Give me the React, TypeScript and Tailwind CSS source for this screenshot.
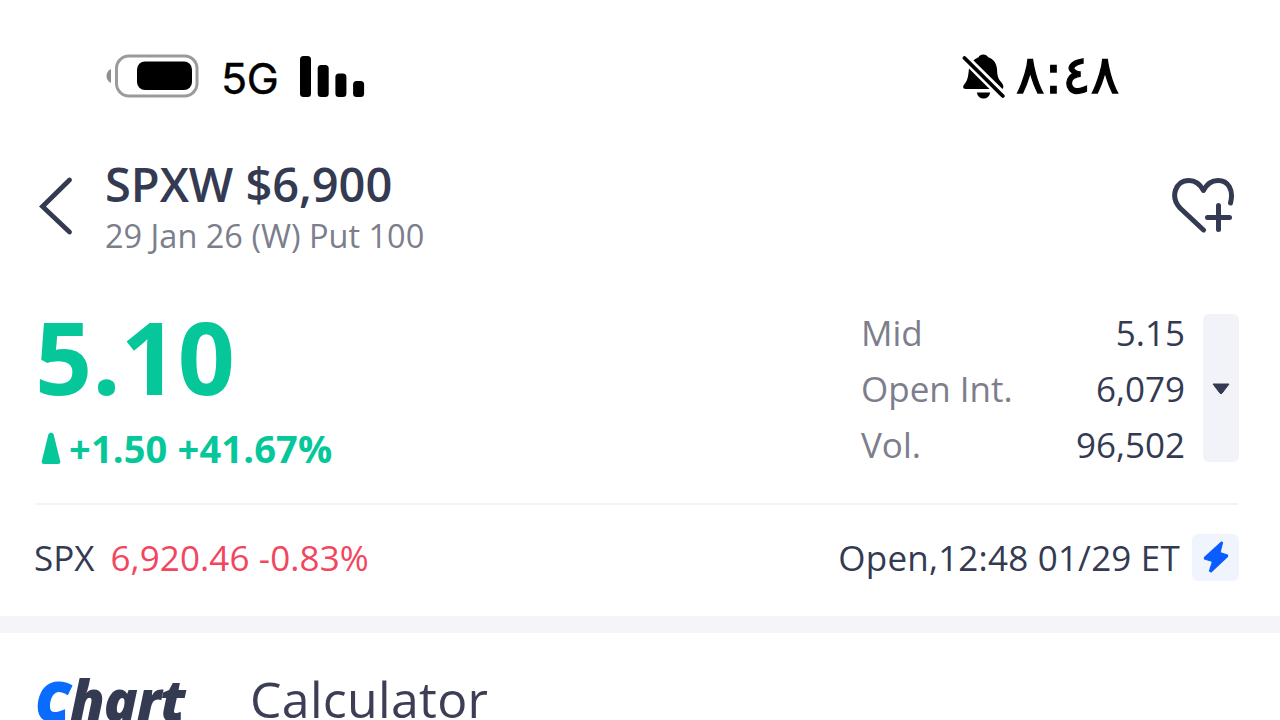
const STATS = [
  { label: "Mid", value: "5.15" },
  { label: "Open Int.", value: "6,079" },
  { label: "Vol.", value: "96,502" },
];

const SIGNAL_BARS = [
  { y: 0, height: 41 },
  { y: 9, height: 32 },
  { y: 17.5, height: 23.5 },
  { y: 25, height: 16 },
];

function BatteryIcon() {
  return (
    <svg width="93" height="44" viewBox="0 0 93 44" fill="none">
      <path d="M5 15v14C2 27.500 0.500 25 0.500 22S2 16.500 5 15Z" fill="#8f8f8f" />
      <rect x="10.500" y="2" width="80.500" height="40" rx="12.500" stroke="#9b9b9b" strokeWidth="3" />
      <rect x="31" y="7.500" width="55" height="28.500" rx="8" fill="#000" />
    </svg>
  );
}

function SignalIcon() {
  return (
    <svg width="65" height="41" viewBox="0 0 65 41">
      {SIGNAL_BARS.map((bar, index) => (
        <rect
          key={bar.y}
          x={index * 17.7}
          y={bar.y}
          width="11"
          height={bar.height}
          rx="3.500"
        />
      ))}
    </svg>
  );
}

function MutedBellIcon() {
  return (
    <svg width="43" height="48" viewBox="0 0 43 48">
      <path d="M11.500 8.500C12.800 7 14.500 6 16.500 5.200 17.500 3.500 19 2.500 21.300 2.500S25 3.500 26.200 5.200C31.500 7 34.500 11 35 17c0.300 7 1 9.500 4.500 13.500 2 2.300 2.500 4.500 1 6.500Z" />
      <path d="M7 16.500 27.500 37H3.500C1 37 0.500 34.800 2 32.800 5.500 28.500 6 26 7 16.500Z" />
      <path d="M14.800 40.500h13.400c-0.800 4-3.200 6-6.700 6s-5.900-2-6.700-6Z" />
      <path d="M2.500 6 40.800 44" stroke="#000" strokeWidth="3.800" strokeLinecap="round" />
    </svg>
  );
}

function StatusBar() {
  return (
    <div className="flex h-[152px] items-center justify-between pl-[106px] pr-[161px] text-black">
      <div className="flex items-center">
        <BatteryIcon />
        <span className="ml-[22px] mt-1 w-[58px] font-['Inter','Liberation_Sans',sans-serif] text-[43px] leading-[48px] tracking-[-0.500px] [-webkit-text-stroke:0.400px_black]">
          5G
        </span>
        <span className="ml-[21px]">
          <SignalIcon />
        </span>
      </div>
      <div className="flex items-center">
        <MutedBellIcon />
        <span className="ml-[11px] w-[103px] pb-[2px] font-['DejaVu_Sans',sans-serif] text-[53px] leading-[56px] [-webkit-text-stroke:1.300px_black]">
          ٨:٤٨
        </span>
      </div>
    </div>
  );
}

function Header() {
  return (
    <header className="flex h-[108px] items-center pl-[38px] pr-[44px]">
      <svg width="36" height="60" viewBox="0 0 36 60" fill="none">
        <path d="M31.500 4 4.500 30.500 31.500 56" stroke="#333a52" strokeWidth="4.800" strokeLinecap="round" strokeLinejoin="miter" />
      </svg>
      <div className="ml-[31px] flex-1 pt-[3px]">
        <h1 className="text-[47px] font-semibold leading-[56px] tracking-[-0.050px]">SPXW $6,900</h1>
        <p className="text-[32.500px] leading-[47px] text-[#7c7e8c]">29 Jan 26 (W) Put 100</p>
      </div>
      <svg width="64" height="58" viewBox="0 0 64 58" fill="none" stroke="#333a52" strokeWidth="5" strokeLinecap="round" strokeLinejoin="round">
        <path d="M31.500 53 8 31C-2 20 3 3.500 17 3.500c6 0 11 3.500 14.500 10C35 6.500 40 3.500 46 3.500c10 0 16 9 12.500 22.500" />
        <path d="M46.500 28.500v24M35.500 40.500h22" />
      </svg>
    </header>
  );
}

function Quote() {
  return (
    <section className="ml-[35px] mr-[42px] flex h-[245px] justify-between border-b-2 border-[#f3f3f6]">
      <div className="pt-[46px] font-bold text-[#06c79a]">
        <p className="text-[100px] leading-[100px]">5.10</p>
        <div className="mt-[18px] flex items-center">
          <svg width="20" height="34" viewBox="0 0 20 34" className="ml-[6px]">
            <path d="M7.500 3Q10 0 12.500 3L19.300 30.500Q19.500 33 17 33H3Q0.500 33 0.700 30.500Z" fill="currentColor" />
          </svg>
          <span className="ml-2 text-[38px] leading-[48px] tracking-[0.150px]">+1.50 +41.67%</span>
        </div>
      </div>
      <div className="mr-[-1px] flex">
        <dl className="w-[324px] pt-[45px] text-[35px] leading-[56px]">
          {STATS.map((stat) => (
            <div key={stat.label} className="flex justify-between">
              <dt className="text-[#7c7e8c]">{stat.label}</dt>
              <dd>{stat.value}</dd>
            </div>
          ))}
        </dl>
        <button
          type="button"
          aria-label="More"
          className="ml-[18px] mt-[54px] flex h-[148px] w-[36px] items-center justify-center rounded-md bg-[#f2f3f9] pt-[2px]"
        >
          <svg width="18" height="12" viewBox="0 0 18 12">
            <path d="M1 1h16L10 10.300Q9 11.300 8 10.300Z" fill="#333a52" stroke="#333a52" strokeLinejoin="round" />
          </svg>
        </button>
      </div>
    </section>
  );
}

function Underlying() {
  return (
    <section className="flex h-[111px] items-center justify-between pb-[7px] pl-[34px] pr-[41px] text-[35px] leading-[56px]">
      <p className="pt-[2px]">
        SPX<span className="ml-4 tracking-[0.100px] text-[#f2465f]">6,920.46 -0.83%</span>
      </p>
      <div className="flex items-center">
        <span className="pt-[2px] tracking-[0.200px]">Open,12:48 01/29 ET</span>
        <span className="ml-3 flex size-[47px] items-center justify-center rounded-md bg-[#f0f4fd]">
          <svg width="26" height="34" viewBox="0 0 26 34">
            <path d="M18.500 2 1.500 17.500v1.500l8 2.500L6.500 31l1.500 1L24.500 16.500v-1.500l-7.500-2.500L19.500 2.500Z" fill="#0a5cff" stroke="#0a5cff" strokeWidth="1.200" strokeLinejoin="round" />
          </svg>
        </span>
      </div>
    </section>
  );
}

function Tabs() {
  return (
    <nav className="flex pl-[36px] pt-[31px] leading-[70px]">
      <span className="w-[214px] text-[56px] font-extrabold italic tracking-[-1px]">
        <span className="inline-block w-[34px] text-[53px] leading-none text-[#0a6cff] [-webkit-text-stroke:2px_#0a6cff]">C</span>
        hart
      </span>
      <span className="text-[50px] tracking-[0.300px] text-[#3b3e55]">Calculator</span>
    </nav>
  );
}

export default function App() {
  return (
    <main className="h-[720px] w-[1280px] overflow-hidden bg-white font-['Open_Sans','Noto_Sans',sans-serif] text-[#333a52]">
      <StatusBar />
      <Header />
      <Quote />
      <Underlying />
      <div className="h-[17px] bg-[#f4f4f9]" />
      <Tabs />
    </main>
  );
}
